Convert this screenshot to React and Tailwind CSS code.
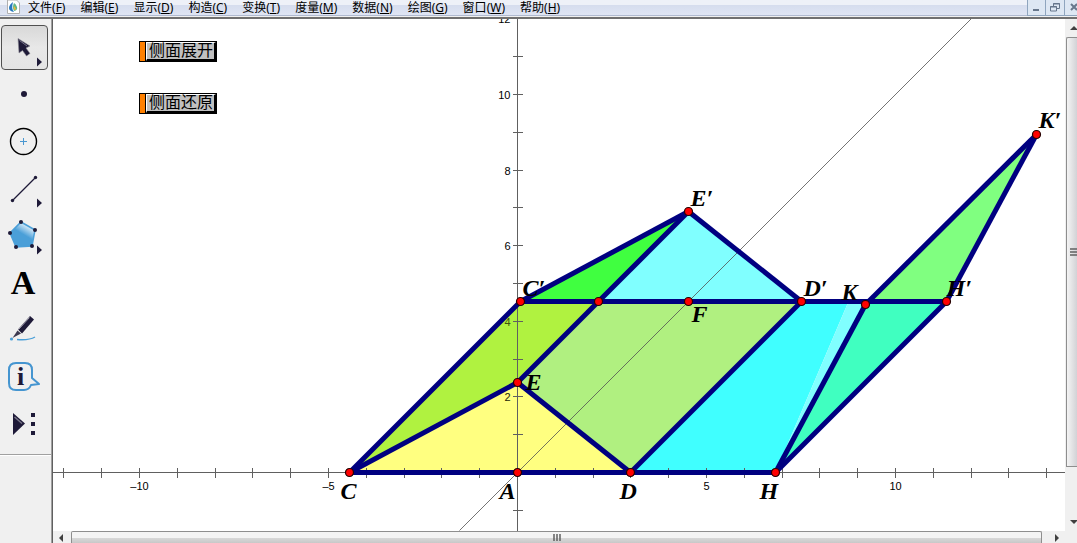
import React from "react";

const menus = [
  ["文件", "F"],
  ["编辑", "E"],
  ["显示", "D"],
  ["构造", "C"],
  ["变换", "T"],
  ["度量", "M"],
  ["数据", "N"],
  ["绘图", "G"],
  ["窗口", "W"],
  ["帮助", "H"],
];

// sketch points, in pixels from the origin A
const P = {
  C: [-168, 0],
  A: [0, 0],
  D: [113, 0],
  H: [258, 0],
  E: [0, -90],
  C1: [3, -171],
  M: [81, -171],
  F: [171, -171],
  E1: [171, -261],
  D1: [284, -171],
  K: [348, -168],
  H1: [429, -171],
  K1: [519, -338],
  S: [331, -171],
  T: [352, -171],
};

const faces = [
  ["#ffff80", ["C", "E", "D"]],
  ["#b0f240", ["C", "C1", "M", "E"]],
  ["#b0f080", ["E", "M", "D1", "D"]],
  ["#40ff40", ["C1", "E1", "M"]],
  ["#80ffff", ["M", "E1", "D1"]],
  ["#40ffff", ["D", "D1", "S", "H"]],
  ["#80ffff", ["H", "S", "T", "K"]],
  ["#40ffc0", ["H", "K", "T", "H1"]],
  ["#80ff80", ["K", "K1", "H1", "T"]],
];

const edges = [
  ["C", "H"],
  ["C1", "H1"],
  ["C", "C1"],
  ["C", "E"],
  ["E", "D"],
  ["C1", "E1"],
  ["E", "E1"],
  ["E1", "D1"],
  ["D", "D1"],
  ["H", "K"],
  ["H", "H1"],
  ["K", "K1"],
  ["K1", "H1"],
];

const dots = ["C", "A", "D", "H", "E", "C1", "M", "F", "E1", "D1", "K", "H1", "K1"];

const names = [
  ["C", -177, 26],
  ["A", -18, 26],
  ["D", 102, 26],
  ["H", 242, 26],
  ["E", 8, -83],
  ["F", 174, -151],
  ["C′", 5, -177],
  ["E′", 173, -267],
  ["D′", 286, -177],
  ["K", 324, -173],
  ["H′", 429, -177],
  ["K′", 521, -345],
];

const UNIT = 37.8;
const xTicks = Array.from({ length: 27 }, (_, i) => i - 12).filter((n) => n !== 0);
const yTicks = Array.from({ length: 13 }, (_, i) => i - 1).filter((n) => n !== 0);
const at = (n) => Math.round(n * UNIT);

const Sketch = () => (
  <svg className="absolute inset-0 w-full h-full" role="img" aria-label="几何画板">
    <g transform="translate(464.5 453.5)">
      <g fontSize="11" fill="#000" fontFamily="'Liberation Sans', sans-serif">
        <text x={at(-10)} y="17" textAnchor="middle">–10</text>
        <text x={at(-5)} y="17" textAnchor="middle">–5</text>
        <text x={at(5)} y="17" textAnchor="middle">5</text>
        <text x={at(10)} y="17" textAnchor="middle">10</text>
        {[6, 8, 10, 12].map((n) => (
          <text key={n} x="-7" y={4 - at(n)} textAnchor="end">{n}</text>
        ))}
      </g>
      {faces.map(([fill, pts], i) => (
        <polygon key={i} fill={fill} points={pts.map((p) => P[p].join(",")).join(" ")} />
      ))}
      <g fontSize="11" fontFamily="'Liberation Sans', sans-serif" textAnchor="end">
        <text x="-7" y={4 - at(4)} fill="#3c520c">4</text>
        <text x="-7" y={4 - at(2)} fill="#1c2608">2</text>
      </g>
      <g stroke="#606060" shapeRendering="crispEdges">
        <path d="M-465 0H601M0-454V58" />
        {xTicks.map((n) => (
          <path key={n} d={`M${at(n)}-5v10`} />
        ))}
        {yTicks.map((n) => (
          <path key={n} d={`M-5 ${-at(n)}h10`} />
        ))}
      </g>
      <path d="M-58 58L454-454" stroke="#505050" strokeWidth="0.8" />
      <g stroke="#000080" strokeWidth="5">
        {edges.map(([a, b]) => (
          <line key={a + b} x1={P[a][0]} y1={P[a][1]} x2={P[b][0]} y2={P[b][1]} />
        ))}
      </g>
      {dots.map((d) => (
        <circle key={d} cx={P[d][0]} cy={P[d][1]} r="4" fill="#f00" stroke="#200" strokeWidth="1.2" />
      ))}
      <g
        fontSize="24"
        fontWeight="bold"
        fontStyle="italic"
        fontFamily="'Liberation Serif', serif"
      >
        {names.map(([t, x, y]) => (
          <text key={t} x={x} y={y}>{t}</text>
        ))}
      </g>
    </g>
  </svg>
);

const More = () => <path d="M37 33.500l5 4.500-5 4.500z" fill="#1e1a38" />;

const icons = [
  [
    "选择",
    <>
      <path d="M18 14.500L19 29l3.500-2.500 4 5.500 3.500-2.500-4-5.500 4-2z" fill="#1e1a38" stroke="#8b8994" strokeWidth="0.6" />
      <path d="M19.500 16.500L27 22" stroke="#77758a" />
      <More />
    </>,
  ],
  ["点", <circle cx="24" cy="23" r="3" fill="#1e1a38" />],
  [
    "圆",
    <>
      <circle cx="23.500" cy="23.500" r="13" fill="none" stroke="#000" strokeWidth="1.400" />
      <path d="M20 23.500h7M23.500 20v7" stroke="#4a97d0" />
    </>,
  ],
  [
    "线段",
    <>
      <path d="M12.500 35.500l23-23" stroke="#1e1a38" strokeWidth="1.300" />
      <circle cx="12.500" cy="35.500" r="1.700" fill="#1e1a38" />
      <circle cx="35.500" cy="12.500" r="1.700" fill="#1e1a38" />
      <More />
    </>,
  ],
  [
    "多边形",
    <>
      <defs>
        <linearGradient id="penta" x1="0.78" y1="0.1" x2="0.54" y2="0.5">
          <stop offset="0" stopColor="#e8f4fc" />
          <stop offset="0.3" stopColor="#c4e0f4" />
          <stop offset="1" stopColor="#4a9fd8" />
        </linearGradient>
      </defs>
      <path d="M21 10l14 8-3 16-16 1-6-14z" fill="url(#penta)" />
      <path d="M21 10l14 8-3 16-16 1-6-14z" fill="none" stroke="#4a9fd8" strokeWidth="1.500" />
      {[[21, 10], [35, 18], [32, 34], [16, 35], [10, 21]].map(([x, y]) => (
        <circle key={x} cx={x} cy={y} r="2" fill="#1e1a38" />
      ))}
      <More />
    </>,
  ],
  [
    "文本",
    <text x="23" y="35" textAnchor="middle" fontSize="34" fontWeight="bold" fontFamily="'Liberation Serif', serif">
      A
    </text>,
  ],
  [
    "标记",
    <>
      <path d="M30 10l4 3.500-12 14-4-4z" fill="#1e1a38" />
      <path d="M29.500 11.500L18.500 23.500" stroke="#aaa8b5" />
      <path d="M17.500 24.500l3.500 3-8.500 4.500z" fill="#3c394f" />
      <circle cx="11.500" cy="33" r="1.600" fill="#4a9fd8" />
      <path d="M17 33.500q12 1 18-2.500" fill="none" stroke="#4a9fd8" strokeWidth="1.400" />
    </>,
  ],
  [
    "信息",
    <>
      <path
        d="M16 10h9q7 0 7 7v8l7 6-8 1q-2 5-7 5h-8q-7 0-7-7V17q0-7 7-7z"
        fill="none"
        stroke="#4595d0"
        strokeWidth="2"
        strokeLinejoin="round"
      />
      <text x="20.500" y="32" textAnchor="middle" fontSize="26" fontWeight="bold" fill="#1e1a38" fontFamily="'Liberation Serif', serif">
        i
      </text>
    </>,
  ],
  [
    "自定义工具",
    <>
      <path d="M13 13l12 10.500L13 35z" fill="#1e1a38" />
      <path d="M14.500 17l7.500 6.500" stroke="#777488" strokeWidth="1.500" />
      <path d="M31 13h4v4h-4zM31 22h4v4h-4zM31 31h4v4h-4z" fill="#1e1a38" />
    </>,
  ],
];

const Toolbar = () => (
  <aside className="w-[53px] shrink-0 border-r border-[#606060] bg-[#f0f0f0]">
    <div className="h-full border-r border-[#a0a0a0] pt-[5px]">
      {icons.map(([label, icon], i) => (
        <button
          key={label}
          aria-label={label}
          className="relative block w-full h-[47px]"
        >
          {i === 0 && (
            <span className="absolute left-px right-[3px] inset-y-px rounded-sm border border-[#505050] bg-linear-to-b from-[#d8d8d8] via-[#e8e8e8] to-[#e4e4e4]" />
          )}
          <svg className="relative w-full h-full" viewBox="0 0 51 47">{icon}</svg>
        </button>
      ))}
      <hr className="mt-[7px] border-[#a0a0a0] shadow-[0_1px_0_#fff]" />
    </div>
  </aside>
);

const ActionButton = ({ children }) => (
  <button className="flex h-[21px] border border-black bg-[#c0c0c0]">
    <span className="h-full w-[6px] border-r border-black bg-[#ff8000]" />
    <span className="h-full border-t border-l border-white border-r-2 border-b-2 border-r-black border-b-black pl-[2px] pr-px text-base leading-[14px] text-black">
      {children}
    </span>
  </button>
);

const MenuBar = () => (
  <header className="flex h-[19px] items-start border-b-2 border-[#707070] bg-[#f0f0f0]">
    <div className="flex h-4 flex-1 items-start border-b border-[#b0bad0] bg-linear-to-b from-[#eef1f8] from-30% via-[#d6ddee] via-35% to-[#dfe5f4]">
      <svg className="ml-[7px] mr-[8px] h-[14px] w-[13px] shrink-0" viewBox="0 0 13 14">
        <path d="M0.500 0h9l3 3v10.500h-12z" fill="#fff" stroke="#b0b0b0" />
        <path d="M6 2q-4 3-4 6t5 4q-3-3-1-10z" fill="#2879c0" />
        <path d="M7 3q-2 4 0 8 4-1 3-4T7 3z" fill="#60b888" />
        <path d="M7 6q-1 3 1 4 2-1-1-4z" fill="#f2b632" />
      </svg>
      <nav className="flex gap-[15px]">
        {menus.map(([name, key]) => (
          <button key={key} className="text-xs leading-4 text-black whitespace-nowrap">
            {name}(<span className="underline">{key}</span>)
          </button>
        ))}
      </nav>
    </div>
    <div className="flex h-4 w-[50px] shrink-0 overflow-hidden">
      <button aria-label="最小化" className="h-4 w-[19px] shrink-0 border-x border-b border-[#8fa5be] bg-[#dde7f3]">
        <svg className="h-full w-full" viewBox="0 0 17 15"><path d="M5 10h6" stroke="#67778c" strokeWidth="2" /></svg>
      </button>
      <button aria-label="还原" className="h-4 w-[19px] shrink-0 border-r border-b border-[#8fa5be] bg-[#dde7f3]">
        <svg className="h-full w-full" viewBox="0 0 18 15" fill="none" stroke="#67778c">
          <path d="M7.500 6V3.500h6v5H11M7 4h7" />
          <path d="M4.500 6.500h6v4.500h-6zM4 7h7" />
        </svg>
      </button>
      <button aria-label="关闭" className="h-4 w-[19px] shrink-0 border-b border-[#8fa5be] bg-[#dde7f3]">
        <svg className="h-full w-full" viewBox="0 0 19 15"><path d="M6 4l6 6M12 4l-6 6" stroke="#67778c" strokeWidth="2" /></svg>
      </button>
    </div>
  </header>
);

const VScroll = () => (
  <div className="flex w-3 shrink-0 flex-col overflow-hidden bg-[#f0f0f0]">
    <svg className="h-[18px] w-3 shrink-0" viewBox="0 0 12 18"><path d="M5 11l4-4 4 4z" fill="#404040" /></svg>
    <div className="ml-px flex flex-1 items-center justify-end rounded-tl-xs border border-r-0 border-[#8e8e8e] bg-linear-to-r from-[#f4f4f4] to-[#d2d2d6]">
      <svg className="h-2 w-[7px]" viewBox="0 0 7 8"><path d="M0 1h7M0 4h7M0 7h7" stroke="#606060" strokeWidth="1.5" /></svg>
    </div>
    <svg className="mt-[46px] h-[18px] w-3 shrink-0" viewBox="0 0 12 18"><path d="M5 7h8l-4 4z" fill="#404040" /></svg>
  </div>
);

const HScroll = () => (
  <div className="flex h-3 shrink-0 bg-[#f0f0f0]">
    <svg className="h-3 w-[18px] shrink-0" viewBox="0 0 18 12"><path d="M10 3v8L6 7z" fill="#404040" /></svg>
    <div className="flex flex-1 items-center justify-center rounded-t-xs border border-b-0 border-[#8e8e8e] bg-linear-to-b from-[#f4f4f4] from-50% via-[#d8d8d8] via-55% to-[#c8c8c8]">
      <svg className="h-[7px] w-2" viewBox="0 0 8 7"><path d="M1 0v7M4 0v7M7 0v7" stroke="#606060" strokeWidth="1.5" /></svg>
    </div>
    <svg className="h-3 w-[35px] shrink-0" viewBox="0 0 35 12"><path d="M13 3v8l4-4z" fill="#404040" /></svg>
  </div>
);

const App = () => {
  return (
    <div className="flex h-screen flex-col overflow-hidden bg-white font-['Noto_Sans','Noto_Sans_CJK_SC',sans-serif]">
      <MenuBar />
      <div className="flex min-h-0 flex-1">
        <Toolbar />
        <div className="flex min-w-0 flex-1 flex-col">
          <div className="flex min-h-0 flex-1">
            <main className="relative min-w-0 flex-1 overflow-hidden bg-white">
              <Sketch />
              <div className="relative flex flex-col items-start gap-[31px] pt-[22px] pl-[86px]">
                <ActionButton>侧面展开</ActionButton>
                <ActionButton>侧面还原</ActionButton>
              </div>
            </main>
            <VScroll />
          </div>
          <HScroll />
        </div>
      </div>
    </div>
  );
};

export default App;
